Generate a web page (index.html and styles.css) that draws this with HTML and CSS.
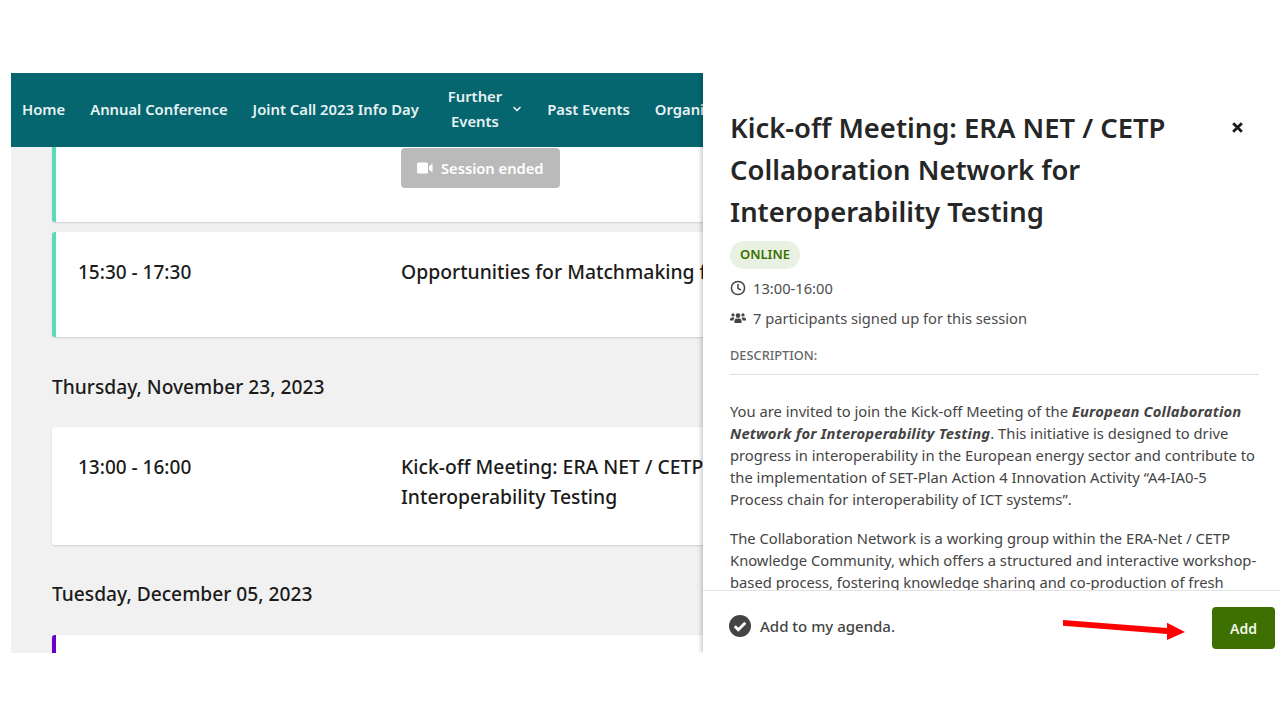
FILE: index.html
```html
<!DOCTYPE html>
<html lang="en">
<head>
<meta charset="utf-8">
<title>Agenda</title>
<link rel="stylesheet" href="styles.css">
</head>
<body>
<div class="stage">
  <nav class="nav">
    <a class="nav-item">Home</a>
    <a class="nav-item">Annual Conference</a>
    <a class="nav-item">Joint Call 2023 Info Day</a>
    <a class="nav-item nav-drop"><span class="nav-two">Further<br>Events</span>
      <svg class="chev" viewBox="0 0 10 10"><path d="M1.500 3 5 6.500 8.500 3" fill="none" stroke="#fff" stroke-width="1.300"/></svg></a>
    <a class="nav-item">Past Events</a>
    <a class="nav-item">Organisers</a>
  </nav>
  <main class="content">
    <section class="card card-teal card-first">
      <div class="time"></div>
      <div class="info">
        <span class="ended">
          <svg class="cam" viewBox="0 0 16 12"><rect x="0" y="0.500" width="11" height="11" rx="1.500" fill="#fff"/><path d="M12 4.500 15.500 1.500V10.500L12 7.500Z" fill="#fff"/></svg>
          Session ended</span>
      </div>
    </section>
    <section class="card card-teal card-second">
      <div class="time">15:30 - 17:30</div>
      <div class="info title">Opportunities for Matchmaking for Joint Projects</div>
    </section>
    <h2 class="date date-thu">Thursday, November 23, 2023</h2>
    <section class="card card-third">
      <div class="time">13:00 - 16:00</div>
      <div class="info title">Kick-off Meeting: ERA NET / CETP Collaboration Network for<br>Interoperability Testing</div>
    </section>
    <h2 class="date date-tue">Tuesday, December 05, 2023</h2>
    <section class="card card-purple"></section>
  </main>
  <aside class="drawer">
    <div class="drawer-body">
      <header class="drawer-head">
        <h1 class="drawer-title">Kick-off Meeting: ERA NET / CETP Collaboration Network for Interoperability Testing</h1>
        <svg class="close" viewBox="0 0 12 12"><path d="M2 2 10 10M10 2 2 10" stroke="#1c1c1c" stroke-width="2.600" fill="none"/></svg>
      </header>
      <span class="badge">ONLINE</span>
      <div class="meta meta-time">
        <svg class="meta-icon" viewBox="0 0 16 16"><circle cx="8" cy="8" r="6.600" fill="none" stroke="#444" stroke-width="1.500"/><path d="M8 4v4.300l2.800 1.700" fill="none" stroke="#444" stroke-width="1.500"/></svg>
        13:00-16:00
      </div>
      <div class="meta meta-people">
        <svg class="meta-icon" viewBox="0 0 16 12"><g fill="#444"><circle cx="8" cy="3.600" r="2.300"/><circle cx="3" cy="2.900" r="1.600"/><circle cx="13" cy="2.900" r="1.600"/><path d="M4.500 11V9a2.500 2.500 0 0 1 2.500-2.500h2A2.500 2.500 0 0 1 11.500 9v2Z"/><path d="M0 8.500V7.500A2 2 0 0 1 2 5.500h2L4.700 6A3.500 3.500 0 0 0 3.400 8.500Z"/><path d="M16 8.500V7.500A2 2 0 0 0 14 5.500h-2L11.300 6A3.500 3.500 0 0 1 12.600 8.500Z"/></g></svg>
        7 participants signed up for this session
      </div>
      <div class="desc-label">DESCRIPTION:</div>
      <p class="para">You are invited to join the Kick-off Meeting of the <strong><em>European Collaboration Network for Interoperability Testing</em></strong>. This initiative is designed to drive progress in interoperability in the European energy sector and contribute to the implementation of SET-Plan Action 4 Innovation Activity “A4-IA0-5 Process chain for interoperability of ICT systems”.</p>
      <p class="para">The Collaboration Network is a working group within the ERA-Net / CETP Knowledge Community, which offers a structured and interactive workshop-based process, fostering knowledge sharing and co-production of fresh insights among participants.</p>
    </div>
    <footer class="drawer-foot">
      <svg class="check" viewBox="0 0 22 22"><circle cx="11" cy="11" r="11" fill="#444"/><path d="M5.800 11.300 9.300 14.800 16.300 7.800" fill="none" stroke="#fff" stroke-width="2.800"/></svg>
      <span class="agenda">Add to my agenda.</span>
      <button class="add">Add</button>
    </footer>
  </aside>
</div>
<svg class="arrow" viewBox="0 0 126 22"><path d="M1 1 105 9 105 3.700 123 13 105 21 105 15 1 6.700Z" fill="#f00"/></svg>
</body>
</html>
```
FILE: styles.css
```css
* { box-sizing: border-box; }
html, body { margin: 0; padding: 0; }
body {
  background: #fff;
  height: 720px;
  overflow: hidden;
  font-family: "Noto Sans", "Open Sans", sans-serif;
  padding-top: 73px;
  padding-left: 11px;
  position: relative;
}
.stage {
  position: relative;
  width: 1269px;
  height: 580px;
  overflow: hidden;
  background: #f1f1f1;
}
.nav {
  height: 74px;
  background: #056670;
  display: flex;
  align-items: center;
  padding-left: 11px;
  padding-bottom: 2px;
  gap: 25px;
  white-space: nowrap;
}
.nav-item { color: #e8f2f3; font-size: 14.800px; font-weight: 600; line-height: 25px; }
.nav-drop { display: flex; align-items: center; gap: 10px; margin-left: 4px; }
.nav-two { text-align: center; display: block; }
.chev { width: 10px; height: 10px; }
.content { padding: 0 0 0 41px; width: 1228px; }
.card {
  background: #fff;
  border-radius: 3px;
  box-shadow: 0 1px 2px rgba(0,0,0,.14);
  display: flex;
  color: #1b1b1b;
}
.card-teal { border-left: 4px solid #5adbb9; }
.card-first { height: 75px; padding-top: 1px; border-radius: 0 0 3px 3px; }
.card-second { height: 105px; margin-top: 10px; padding-top: 25px; }
.card-third { height: 118px; padding-top: 25px; padding-left: 4px; }
.card-purple { height: 40px; border-left: 4px solid #6a00c8; }
.time { width: 345px; padding-left: 22px; font-size: 19px; font-weight: 500; line-height: 30px; flex: none; }
.info { flex: 1; min-width: 0; }
.title { font-size: 19.350px; font-weight: 500; line-height: 30px; white-space: nowrap; }
.ended {
  display: inline-flex;
  align-items: center;
  gap: 8px;
  height: 40px;
  width: 159px;
  padding-left: 16px;
  background: #bababa;
  color: #fff;
  border-radius: 4px;
  font-size: 14.700px;
  font-weight: 600;
}
.cam { width: 16px; height: 12px; }
.date { margin: 0; font-size: 19.200px; font-weight: 500; line-height: 26px; color: #1b1b1b; }
.date-thu { padding-top: 37px; height: 90px; }
.date-tue { padding-top: 36px; height: 90px; }
.drawer {
  position: absolute;
  top: 0;
  right: 0;
  bottom: 0;
  width: 577px;
  background: #fff;
  box-shadow: -2px 0 4px rgba(0,0,0,.2);
  display: flex;
  flex-direction: column;
}
.drawer-body { flex: 1; min-height: 0; overflow: hidden; padding: 34px 21px 0 27px; }
.drawer-head { display: flex; justify-content: space-between; align-items: flex-start; }
.drawer-title { margin: 0; width: 470px; font-size: 27.400px; font-weight: 600; line-height: 42px; color: #262626; }
.close { width: 13px; height: 13px; margin-top: 14px; margin-right: 15px; }
.badge {
  display: inline-block;
  margin-top: 8px;
  height: 28px;
  width: 70px;
  border-radius: 14px;
  background: #e9f1e2;
  color: #3a7000;
  font-size: 13px;
  font-weight: 600;
  line-height: 27px;
  text-align: center;
}
.meta { display: flex; align-items: center; gap: 7px; color: #4c4c4c; font-size: 14.700px; line-height: 20px; }
.meta-time { margin-top: 9px; }
.meta-people { margin-top: 10px; }
.meta-icon { width: 16px; height: 16px; flex: none; }
.desc-label {
  margin-top: 19px;
  padding-bottom: 10px;
  border-bottom: 1px solid #e0e0e0;
  color: #666;
  font-size: 12.800px;
  font-weight: 500;
  line-height: 17px;
}
.para { margin: 25px 0 0; font-size: 14.760px; line-height: 22px; color: #444; }
.para + .para { margin-top: 17px; }
.para strong { font-weight: 700; letter-spacing: .2px; }
.drawer-foot {
  height: 63px;
  flex: none;
  border-top: 1px solid #e4e4e4;
  background: #fff;
  display: flex;
  align-items: flex-start;
  padding: 16px 5px 0 26px;
  position: relative;
}
.check { width: 22px; height: 22px; flex: none; margin-top: 8px; }
.agenda { margin-left: 9px; margin-top: 9px; font-size: 15px; font-weight: 500; line-height: 20px; color: #444; }
.add {
  margin-left: auto;
  width: 63px;
  height: 42px;
  border: 0;
  border-radius: 4px;
  background: #3d7000;
  color: #f2f6ec;
  font: 600 14px "Noto Sans", sans-serif;
}
.arrow { position: absolute; left: 1062px; top: 619px; width: 126px; height: 22px; }
```
